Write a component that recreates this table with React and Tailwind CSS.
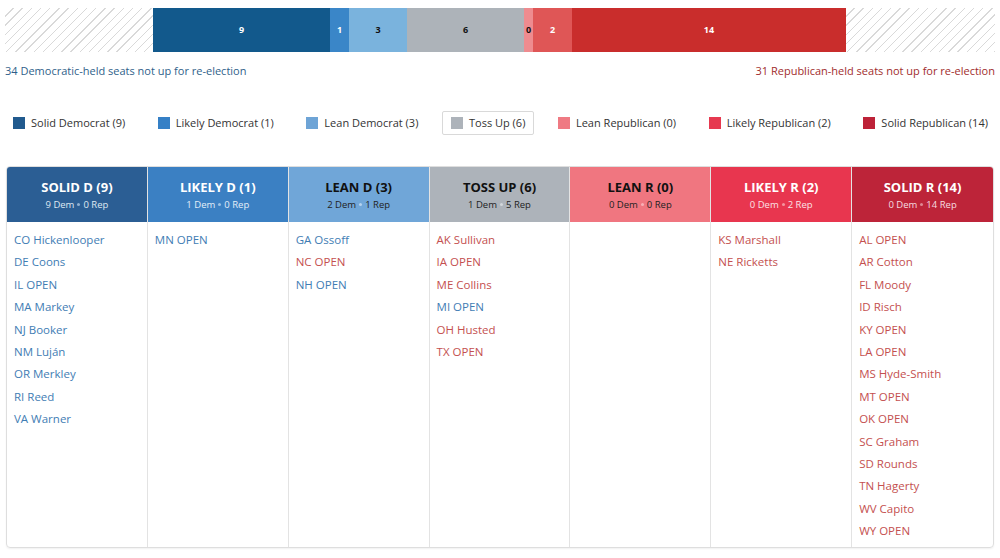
import React from "react";

const segs = [
  { n: "9", w: "w-[177px]", c: "bg-[#12598c] text-white" },
  { n: "1", w: "w-[19px]", c: "bg-[#3a86c8] text-white" },
  { n: "3", w: "w-[58px]", c: "bg-[#7ab3dd] text-[#111]" },
  { n: "6", w: "w-[117px]", c: "bg-[#adb3b9] text-[#111]" },
  { n: "0", w: "w-[9px]", c: "bg-[#ee8b8f] text-[#111]" },
  { n: "2", w: "w-[39px]", c: "bg-[#df5656] text-white" },
  { n: "14", w: "w-[274px]", c: "bg-[#c92d2c] text-white" },
];

const legend = [
  { t: "Solid Democrat (9)", c: "bg-[#215a8e]" },
  { t: "Likely Democrat (1)", c: "bg-[#3580c6]" },
  { t: "Lean Democrat (3)", c: "bg-[#6ea4d6]" },
  { t: "Toss Up (6)", c: "bg-[#adb3ba]", sel: true },
  { t: "Lean Republican (0)", c: "bg-[#ef7a83]" },
  { t: "Likely Republican (2)", c: "bg-[#e63950]" },
  { t: "Solid Republican (14)", c: "bg-[#bd2238]" },
];

const B = "text-[#3f7db4]";
const R = "text-[#c4504f]";

const cols = [
  {
    t: "SOLID D (9)", s: ["9 Dem", "0 Rep"], h: "bg-[#2b5e94] text-white", sub: "text-[#dfe8f2]", dot: "bg-[#8fb0d2]",
    items: [["CO Hickenlooper", B], ["DE Coons", B], ["IL OPEN", B], ["MA Markey", B], ["NJ Booker", B], ["NM Luján", B], ["OR Merkley", B], ["RI Reed", B], ["VA Warner", B]],
  },
  {
    t: "LIKELY D (1)", s: ["1 Dem", "0 Rep"], h: "bg-[#3b80c3] text-white", sub: "text-[#e3eef8]", dot: "bg-[#9cc2e6]",
    items: [["MN OPEN", B]],
  },
  {
    t: "LEAN D (3)", s: ["2 Dem", "1 Rep"], h: "bg-[#70a6d8] text-[#111]", sub: "text-[#222]", dot: "bg-[#b5d2ee]",
    items: [["GA Ossoff", B], ["NC OPEN", R], ["NH OPEN", B]],
  },
  {
    t: "TOSS UP (6)", s: ["1 Dem", "5 Rep"], h: "bg-[#adb3ba] text-[#111]", sub: "text-[#222]", dot: "bg-[#d3d7db]",
    items: [["AK Sullivan", R], ["IA OPEN", R], ["ME Collins", R], ["MI OPEN", B], ["OH Husted", R], ["TX OPEN", R]],
  },
  {
    t: "LEAN R (0)", s: ["0 Dem", "0 Rep"], h: "bg-[#f07680] text-[#111]", sub: "text-[#222]", dot: "bg-[#f7b0b5]",
    items: [],
  },
  {
    t: "LIKELY R (2)", s: ["0 Dem", "2 Rep"], h: "bg-[#e8364f] text-white", sub: "text-[#fbe3e6]", dot: "bg-[#f4949f]",
    items: [["KS Marshall", R], ["NE Ricketts", R]],
  },
  {
    t: "SOLID R (14)", s: ["0 Dem", "14 Rep"], h: "bg-[#bd2439] text-white", sub: "text-[#f6dde0]", dot: "bg-[#de8893]",
    items: [["AL OPEN", R], ["AR Cotton", R], ["FL Moody", R], ["ID Risch", R], ["KY OPEN", R], ["LA OPEN", R], ["MS Hyde-Smith", R], ["MT OPEN", R], ["OK OPEN", R], ["SC Graham", R], ["SD Rounds", R], ["TN Hagerty", R], ["WV Capito", R], ["WY OPEN", R]],
  },
];

const hatch = "bg-[repeating-linear-gradient(135deg,#ffffff_0px,#ffffff_5.5px,#d9d9d9_5.5px,#d9d9d9_6.5px)]";

export default function App() {
  return (
    <div className="w-[1000px] h-[558px] bg-white overflow-hidden font-['Open_Sans',sans-serif]">
      {/* seat bar */}
      <div className="flex h-[44px] mt-[8px] px-[5px]">
        <div className={`w-[148px] ${hatch}`} />
        {segs.map((s, i) => (
          <div key={i} className={`${s.w} ${s.c} flex items-center justify-center text-[9px] font-bold`}>
            {s.n}
          </div>
        ))}
        <div className={`flex-1 ${hatch}`} />
      </div>
      <div className="flex justify-between px-[5px] mt-[11px] text-[11px] leading-[16px]">
        <span className="text-[#2f5f8a]">34 Democratic-held seats not up for re-election</span>
        <span className="text-[#a12d2d]">31 Republican-held seats not up for re-election</span>
      </div>
      {/* legend */}
      <div className="flex justify-between items-center pl-[4px] pr-[3px] mt-[32px] h-[24px]">
        {legend.map((l, i) => (
          <div
            key={i}
            className={`flex items-center h-[24px] px-[8px] rounded-[2px] border ${l.sel ? "border-[#d9d9d9]" : "border-transparent"}`}
          >
            <span className={`w-[12px] h-[12px] ${l.c} mr-[6px]`} />
            <span className="text-[11px] text-[#333]">{l.t}</span>
          </div>
        ))}
      </div>
      {/* table */}
      <div className="mx-[6px] mt-[31px] h-[382px] border border-[#dedede] rounded-[4px] overflow-hidden grid grid-cols-7 shadow-[0_1px_2px_rgba(0,0,0,0.06)]">
        {cols.map((c, i) => (
          <div key={i} className={`flex flex-col ${i < 6 ? "border-r border-[#e3e3e3]" : ""}`}>
            <div className={`h-[55px] ${c.h} flex flex-col items-center justify-center`}>
              <div className="text-[13px] font-bold leading-[18px]">{c.t}</div>
              <div className={`text-[9.5px] leading-[14px] mt-[2px] flex items-center ${c.sub}`}>
                <span>{c.s[0]}</span>
                <span className={`w-[3px] h-[3px] rounded-full mx-[3px] ${c.dot}`} />
                <span>{c.s[1]}</span>
              </div>
            </div>
            <div className="flex-1 pt-[7px] px-[7px]">
              {c.items.map(([t, cl], j) => (
                <div key={j} className={`text-[11.5px] leading-[22.4px] ${cl}`}>
                  {t}
                </div>
              ))}
            </div>
          </div>
        ))}
      </div>
    </div>
  );
}
